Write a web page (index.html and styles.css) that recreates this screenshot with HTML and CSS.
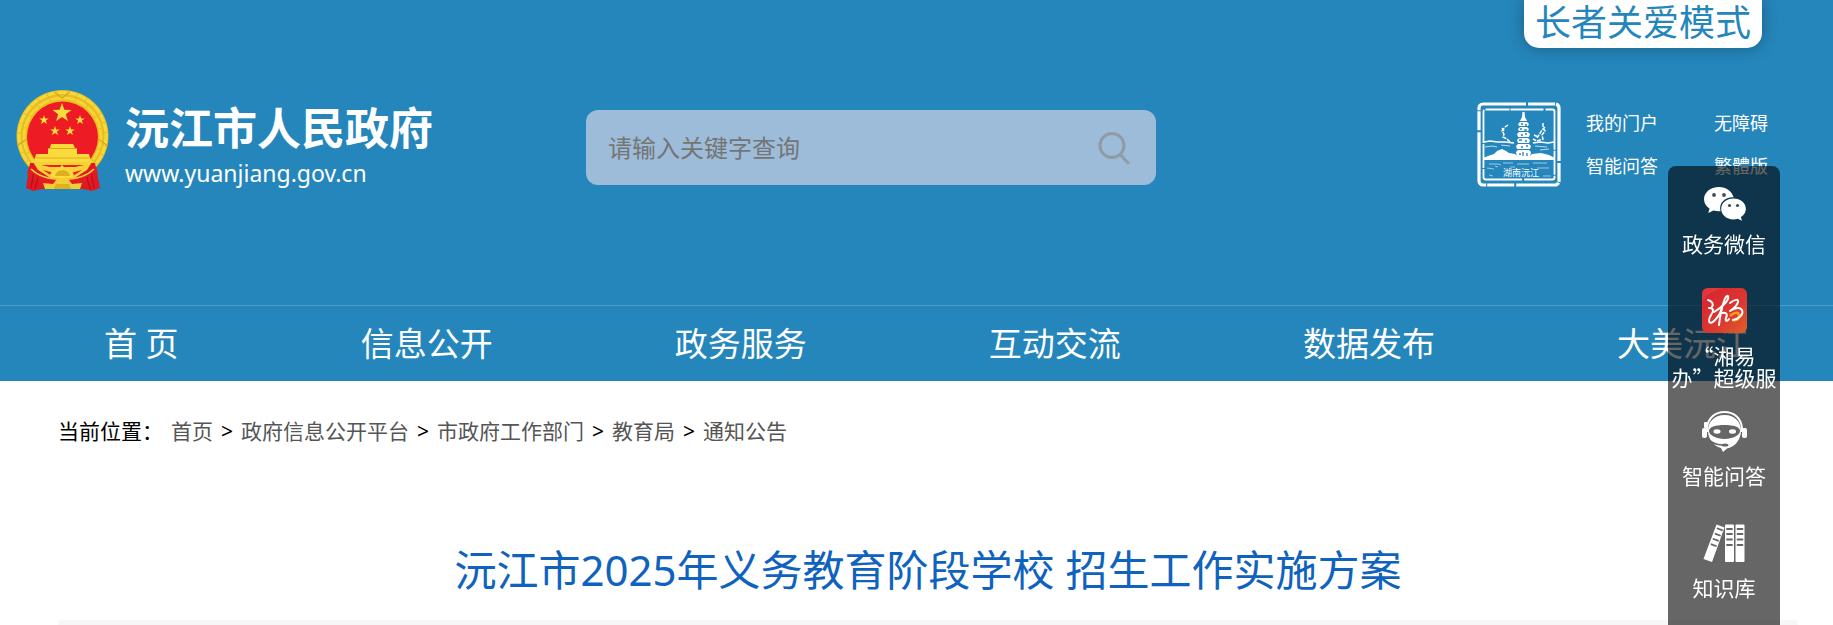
FILE: index.html
```html
<!DOCTYPE html>
<html lang="zh-CN">
<head>
  <meta charset="UTF-8">
  <meta name="viewport" content="width=device-width, initial-scale=1.0">
  <title>沅江市2025年义务教育阶段学校 招生工作实施方案</title>
  <link rel="stylesheet" href="styles.css">
</head>
<body>
  <header class="header">
    <div class="top-bar">
      <a class="elder-mode" href="#">长者关爱模式</a>
    </div>
    <div class="header-main">
      <a class="logo" href="#">
        <svg class="emblem" viewBox="0 0 93 101" aria-hidden="true">
          <circle cx="46.5" cy="46" r="46" fill="#e9bd22"/>
          <circle cx="46.5" cy="46" r="43.5" fill="none" stroke="#f5d83c" stroke-width="3" stroke-dasharray="9 1"/>
          <circle cx="46.5" cy="46.5" r="38.5" fill="none" stroke="#f4d437" stroke-width="3" stroke-dasharray="12 1"/>
          <circle cx="46.5" cy="47" r="35.5" fill="#ed1c24"/>
          <path d="M1 56l10-7M92 56l-10-7M38 2l8 6 8-6" fill="none" stroke="#c69a1c" stroke-width="1"/>
          <defs>
            <path id="star" d="M0-10 2.4-3.2 9.5-3.1 3.8 1.2 5.9 8.1 0 4-5.9 8.1-3.8 1.2-9.5-3.1-2.4-3.2z"/>
          </defs>
          <g fill="#fadb3c">
            <use href="#star" transform="translate(46 23)"/>
            <use href="#star" transform="translate(28 30) scale(.5)"/>
            <use href="#star" transform="translate(64 30) scale(.5)"/>
            <use href="#star" transform="translate(39 41) scale(.5)"/>
            <use href="#star" transform="translate(54 41) scale(.5)"/>
          </g>
          <path d="M14 73h65l5 25-8 3-9-2H26l-9 2-7-3z" fill="#df1822"/>
          <path d="M35 54h22l2 4h2v6H32v-6h2z" fill="#fadb3c"/>
          <path d="M32 58.500h29" stroke="#d9a51d" stroke-width="1"/>
          <path d="M20 64h53l2 8H18z" fill="#fadb3c"/>
          <path d="M20 68h53" stroke="#e0ae20" stroke-width="1"/>
          <path d="M17 72h59l-5 8-14 9H36l-14-9z" fill="#f6d136"/>
          <path d="M25 75h43l-9 2H34zM27 80l11 3-2 3zM66 80l-11 3 2 3z" fill="#ed1c24"/>
          <path d="M34 85l2-4 3 0 1-4 3 1 3-3 3 3 3-1 1 4 3 0 2 4-3 4H37z" fill="#fadb3c"/>
          <path d="M39 86a7.500 6 0 0 1 15 0z" fill="#e0ae20"/>
          <path d="M13 76c6 9 20 13 33.500 13S74 85 80 76l2 8c-7 8-21 12-35.500 12S18 92 11 84z" fill="#e31b24"/>
          <path d="M15 79c7 7 19 10.500 31.500 10.500S71 86 78 79" fill="none" stroke="#f8d335" stroke-width="1.500"/>
          <path d="M27 93l10 1 3-4 4 0 2.500-2 2.500 2 4 0 3 4 10-1-2 6H29z" fill="#f4cd32"/>
          <path d="M38 99l2-5h13l2 5z" fill="#e0ae20"/>
          <path d="M17 84c1 5-2 9-2 14M22 87c0 5-3 8-3 12M76 84c-1 5 2 9 2 14M71 87c0 5 3 8 3 12" fill="none" stroke="#a60f1b" stroke-width="1"/>
        </svg>
        <span class="logo-text">
          <strong class="site-name">沅江市人民政府</strong>
          <span class="site-url">www.yuanjiang.gov.cn</span>
        </span>
      </a>
      <form class="search">
        <input class="search-input" type="text" placeholder="请输入关键字查询" aria-label="请输入关键字查询">
        <button class="search-btn" type="submit" aria-label="搜索">
          <svg viewBox="0 0 32 32" width="32" height="32" fill="none" stroke="#8f9ba5" stroke-width="3" stroke-linecap="round">
            <circle cx="14" cy="13.500" r="12"/>
            <path d="M22.500 22.500 30 31"/>
          </svg>
        </button>
      </form>
      <div class="tools">
        <svg class="seal" viewBox="0 0 84 85" role="img" aria-label="湖南沅江">
          <g fill="none" stroke="#fff">
            <rect x="2" y="2" width="80" height="81" rx="4" stroke-width="3.200" stroke-dasharray="43 2 27 1 58 2 19 1"/>
            <rect x="6.500" y="7.500" width="71" height="70" rx="2" stroke-width="1.800" stroke-dasharray="24 1 33 2 48 1"/>
            <path d="M7 40l6-1 8 1 7 0 9 1M56 41l7-1 8 1 6-1" stroke-width="1.600"/>
            <path d="M8 45l7-1 5 1M24 43l9 1M58 44l12 1M63 48l9-1" stroke-width="1" opacity=".7"/>
            <path d="M31 23l-3 2-3 4 2 3-1 3 4 2 3 3M27 29l-2-3M66 21l0 5 2 3-3 4 1 4-6 2-4-2M60 36l5-8 3-3M57 33l4 2" stroke-width="1.500" stroke-dasharray="4 1"/>
            <path d="M12 62h9l3 1M26 61h10M40 62h12M56 61h14M10 66l7 1M33 65h5M60 66h12M12 73l4 1M66 74h8M18 64l3 1" stroke-width=".8" opacity=".7"/>
          </g>
          <g fill="#fff">
            <path d="M45.500 10h2l.5 5 2 4h-7l2-4z"/>
            <path d="M43 20h7l2 2-1 2h-9l-1-2z"/>
            <path d="M43 25h7l2 2-1 2h-9l-1-2z"/>
            <path d="M42 30h9l2 2-1 3H41l-1-3z"/>
            <path d="M42 36h9l2 2-1 3H41l-1-3z"/>
            <path d="M41 42h11l2 2-1 3H40l-1-3z"/>
            <path d="M41 48h11l2 2-1 6H40l-1-6z"/>
            <path d="M6 56l5-2 6-2 3-3 5-2 4 2 3 2 6 1 2 2h13l2-2 9-1 8 2 6 3v2H6z"/>
          </g>
          <path d="M44 22h2M48 23h2M43 27h2M47 28h3M44 33h2M48 32h2M42 38h3M48 39h2M44 45h2M49 44h2M42 52h2M46 50v4M50 51v3" fill="none" stroke="#2586bb" stroke-width="1.300"/>
          <text class="seal-text" x="26" y="74">湖南沅江</text>
        </svg>
        <nav class="tool-links">
          <a href="#">我的门户</a>
          <a href="#">无障碍</a>
          <a href="#">智能问答</a>
          <a href="#">繁體版</a>
        </nav>
      </div>
    </div>
    <nav class="main-nav">
      <a href="#">首 页</a>
      <a href="#">信息公开</a>
      <a href="#">政务服务</a>
      <a href="#">互动交流</a>
      <a href="#">数据发布</a>
      <a href="#">大美沅江</a>
    </nav>
  </header>

  <main class="content">
    <div class="breadcrumb">
      <span>当前位置：</span>
      <a href="#">首页</a>
      <span>&gt;</span>
      <a href="#">政府信息公开平台</a>
      <span>&gt;</span>
      <a href="#">市政府工作部门</a>
      <span>&gt;</span>
      <a href="#">教育局</a>
      <span>&gt;</span>
      <a href="#">通知公告</a>
    </div>
    <h1 class="article-title">沅江市2025年义务教育阶段学校 招生工作实施方案</h1>
    <div class="article-info"></div>
  </main>

  <aside class="side-bar">
    <a class="side-item" href="#">
      <svg class="side-icon" viewBox="0 0 45 45" aria-hidden="true">
        <path d="M17 11C8.500 11 2 16.500 2 23.200c0 4 2.200 7 5.500 9.300L6.300 37l5.200-2.600c1.800.5 3.500.8 5.500.8h1.500C16.500 27 23 21 31.600 21.300 30 15.500 24.500 11 17 11z" fill="#fff"/>
        <path d="M31.500 22.600c-7 0-12.300 4.600-12.300 10.400s5.300 10.400 12.300 10.400c1.500 0 3-.3 4.400-.7l4 2-1-3.600c3-2 5-5 5-8.100 0-5.800-5.400-10.400-12.400-10.400z" fill="#fff"/>
        <g fill="#3a4f5a">
          <circle cx="12" cy="19" r="1.900"/><circle cx="22" cy="19" r="1.900"/>
          <circle cx="27.500" cy="29.500" r="1.600"/><circle cx="35.500" cy="29.500" r="1.600"/>
        </g>
      </svg>
      <span>政务微信</span>
    </a>
    <a class="side-item" href="#">
      <svg class="side-icon" viewBox="0 0 45 45" aria-hidden="true">
        <defs>
          <linearGradient id="app-bg" x1="0" y1="0" x2="1" y2="1">
            <stop offset="0" stop-color="#d92230"/>
            <stop offset=".6" stop-color="#db3830"/>
            <stop offset="1" stop-color="#e0602a"/>
          </linearGradient>
        </defs>
        <rect width="45" height="45" rx="6" fill="url(#app-bg)"/>
        <path d="M0 14Q8 2 22 0H6Q0 0 0 6z" fill="#e64a45" opacity=".5"/>
        <path d="M28 28c3-3 8-5 9-1s-3 6-7 5" fill="none" stroke="#f9a01b" stroke-width="2.500"/>
        <g fill="none" stroke="#fff" stroke-linecap="round" stroke-linejoin="round" stroke-width="2">
          <path d="M6 12c4 1 6 4 4 7M7 20c5 0 5 3 2 7-4 7-1 10 3 6 5-5 8-11 8-15"/>
          <path d="M12 24c5-3 11-7 14-13 1-5-2-4-4 2-3 8-4 16-5 24"/>
          <path d="M20 25c4-1 6 1 4 5-1 3 1 4 3 1"/>
          <path d="M28 15c5-4 9-4 8-1-1 4-5 7-8 9 5-3 10-4 12-1 2 5-4 9-9 10"/>
        </g>
      </svg>
      <span>“湘易<br>办”超级服</span>
    </a>
    <a class="side-item" href="#">
      <svg class="side-icon" viewBox="0 0 45 45" aria-hidden="true">
        <path d="M5 24V20C6 10 13 4 22.500 4S39 10 40 20v4" fill="none" stroke="#fff" stroke-width="2"/>
        <path d="M22.500 7C12 7 6 14 6 23c0 7 5 15 13 17l2 4 4-3.500C34 39 39 30 39 23 39 14 33 7 22.500 7z" fill="#fff"/>
        <rect x="0" y="20" width="5" height="10" rx="2" fill="#fff"/>
        <rect x="40" y="20" width="5" height="10" rx="2" fill="#fff"/>
        <rect x="2" y="14" width="4" height="6" rx="1" fill="#fff"/>
        <path d="M7 23c0-4 6-6 15.500-6S38 19 38 23s-7 8-15.500 8S7 27 7 23z" fill="#666"/>
        <ellipse cx="15" cy="23.500" rx="3.500" ry="2.200" fill="#fff"/>
        <ellipse cx="30.500" cy="23.500" rx="3.500" ry="2.200" fill="#fff"/>
        <path d="M5 29c3 5 8 8 16 8" fill="none" stroke="#666" stroke-width="1.500"/>
        <ellipse cx="23" cy="37" rx="3.500" ry="1.600" fill="#666"/>
      </svg>
      <span>智能问答</span>
    </a>
    <a class="side-item" href="#">
      <svg class="side-icon" viewBox="0 0 45 45" aria-hidden="true">
        <g fill="#fff">
          <path d="M14.500 4.500l8 3L10 42l-8.500-3z"/>
          <rect x="23" y="4.500" width="9" height="37.500" rx="1"/>
          <rect x="33.500" y="4.500" width="9" height="37.500" rx="1"/>
        </g>
        <g stroke="#666" stroke-width="1.800" stroke-linecap="round">
          <path d="M25 9h5M25 14h5M25 19.500h5M25 25h5M35.500 9h5M35.500 14h5M35.500 19.500h5M35.500 25h5"/>
          <path d="M15.500 8.500l4.500 1.700M13.500 13.800l4.500 1.700M11.500 19l4.500 1.700M9.500 24.300 14 26"/>
        </g>
      </svg>
      <span>知识库</span>
    </a>
  </aside>
</body>
</html>
```
FILE: styles.css
```css
* {
  box-sizing: border-box;
}
body {
  margin: 0;
  background: #fff;
  color: #000;
  font-family: "Noto Sans", "Noto Sans CJK SC", sans-serif;
  font-size: 21px;
}
a {
  color: inherit;
  text-decoration: none;
}
.header {
  background: #2586bb;
  color: #fff;
}
.top-bar {
  display: flex;
  justify-content: flex-end;
  padding-right: 71px;
}
.elder-mode {
  height: 48px;
  padding: 0 11px;
  background: #fff;
  color: #2586bb;
  font-family: "Noto Sans CJK SC", sans-serif;
  font-size: 36px;
  line-height: 40px;
  border-radius: 0 0 15px 15px;
  box-shadow: 0 0 16px rgba(0, 0, 0, 0.3);
}
.header-main {
  display: grid;
  grid-template-columns: 570fr 891fr 292fr;
  align-items: start;
  padding: 42px 64px 114px 16px;
}
.logo {
  display: flex;
  gap: 16px;
}
.emblem {
  width: 93px;
  height: 101px;
  flex: none;
}
.logo-text {
  display: flex;
  flex-direction: column;
  padding-top: 10px;
  white-space: nowrap;
}
.site-name {
  font-size: 44px;
  line-height: 56px;
}
.site-url {
  font-size: 23px;
  line-height: 35px;
}
.search {
  display: flex;
  align-items: center;
  width: 64%;
  height: 75px;
  margin-top: 20px;
  padding: 0 26px 0 22px;
  background: #9cbcd9;
  border-radius: 12px;
}
.search-input {
  flex: 1;
  min-width: 0;
  height: 100%;
  padding: 0;
  border: 0;
  outline: 0;
  background: none;
  color: #333;
  font-family: inherit;
  font-size: 24px;
}
.search-input::placeholder {
  color: #757575;
}
.search-btn {
  display: flex;
  padding: 0;
  border: 0;
  background: none;
  cursor: pointer;
}
.tools {
  display: flex;
  gap: 25px;
  padding-top: 12px;
}
.seal {
  width: 84px;
  height: 85px;
  flex: none;
}
.seal-text {
  fill: #fff;
  font-size: 9px;
}
.tool-links {
  display: grid;
  grid-template-columns: 128px auto;
  font-size: 18px;
  line-height: 43px;
  white-space: nowrap;
}
.main-nav {
  display: flex;
  justify-content: space-between;
  padding: 0 84px 0 104px;
  border-top: 1px solid #4b9cc9;
  font-size: 33px;
  line-height: 75px;
  white-space: nowrap;
}
.content {
  margin: 0 35px 0 58px;
}
.breadcrumb {
  display: flex;
  gap: 8px;
  padding-top: 35px;
  line-height: 30px;
}
.breadcrumb a {
  color: #555;
}
.article-title {
  margin: 93px 0 19px;
  color: #0f63be;
  font-size: 42px;
  font-weight: normal;
  line-height: 62px;
  text-align: center;
}
.article-info {
  height: 5px;
  background: #f7f7f7;
}
.side-bar {
  position: fixed;
  top: 166px;
  right: 53px;
  bottom: 0;
  width: 112px;
  background: rgba(0, 0, 0, 0.6);
  border-radius: 8px 8px 0 0;
  color: #fff;
  font-family: "Noto Sans CJK SC", sans-serif;
}
.side-item {
  display: flex;
  flex-direction: column;
  align-items: center;
  gap: 11px;
  min-height: 112px;
  padding: 10px 0;
  line-height: 22px;
  text-align: center;
}
.side-icon {
  width: 45px;
  height: 45px;
  flex: none;
}
@media (max-width: 1200px) {
  .main-nav { padding: 0 30px; font-size: 24px; }
  .header-main { grid-template-columns: 1fr; gap: 20px; padding-bottom: 40px; }
  .article-title { font-size: 30px; line-height: 44px; }
}
```
